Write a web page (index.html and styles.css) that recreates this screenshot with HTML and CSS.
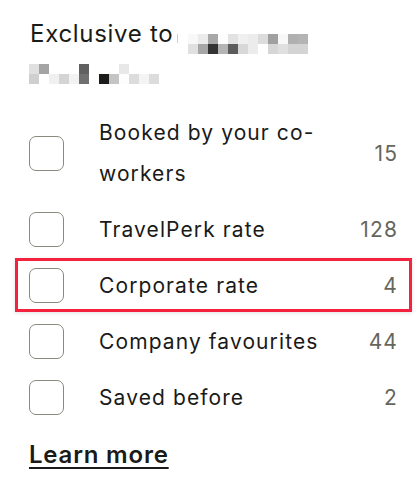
FILE: index.html
```html
<!DOCTYPE html>
<html lang="en">
<head>
    <meta charset="UTF-8">
    <meta name="viewport" content="width=device-width, initial-scale=1.0">
    <title>Exclusive filters</title>
    <link rel="stylesheet" href="styles.css">
</head>
<body>
    <div class="panel">
        <!-- Heading with redacted company name -->
        <div class="title">
            <span>Exclusive to</span><span class="caret"></span><span class="mosaic mosaic-a">
                <i style="background:#f8f8f8"></i><i style="background:#ebebeb"></i><i style="background:#a8a8a8"></i><i style="background:#fdfdfd"></i><i style="background:#e2e2e2"></i><i style="background:#f0f0f0"></i><i style="background:#ececec"></i><i style="background:#dcdcdc"></i><i style="background:#a0a0a0"></i><i style="background:#f8f8f8"></i><i style="background:#b0b0b0"></i><i style="background:#b4b4b4"></i>
                <i style="background:#e0e0e0"></i><i style="background:#a6a6a6"></i><i style="background:#333333"></i><i style="background:#b4b4b4"></i><i style="background:#5c5c5c"></i><i style="background:#d8d8d8"></i><i style="background:#ececec"></i><i style="background:#ffffff"></i><i style="background:#d6d6d6"></i><i style="background:#e0e0e0"></i><i style="background:#d4d4d4"></i><i style="background:#d4d4d4"></i>
            </span>
            <div class="title-line">
                <span class="mosaic mosaic-b">
                    <i style="background:#e0e0e0"></i><i style="background:#a4a4a4"></i><i></i><i></i><i></i><i style="background:#606060"></i><i></i><i></i><i></i><i style="background:#e8e8e8"></i><i></i><i></i><i></i>
                    <i style="background:#cfcfcf"></i><i></i><i style="background:#f0f0f0"></i><i style="background:#d4d4d4"></i><i style="background:#f2f2f2"></i><i style="background:#707070"></i><i></i><i style="background:#1c1c1a"></i><i style="background:#c4c4c4"></i><i style="background:#fdfdfd"></i><i style="background:#dcdcdc"></i><i style="background:#f4f4f4"></i><i style="background:#dcdcdc"></i>
                </span>
            </div>
        </div>

        <!-- Filter options -->
        <ul class="options">
            <li class="option">
                <span class="box"></span>
                <span class="label">Booked by your co-workers</span>
                <span class="count">15</span>
            </li>
            <li class="option">
                <span class="box"></span>
                <span class="label">TravelPerk rate</span>
                <span class="count">128</span>
            </li>
            <li class="option highlight">
                <span class="box"></span>
                <span class="label">Corporate rate</span>
                <span class="count">4</span>
            </li>
            <li class="option">
                <span class="box"></span>
                <span class="label">Company favourites</span>
                <span class="count">44</span>
            </li>
            <li class="option">
                <span class="box"></span>
                <span class="label">Saved before</span>
                <span class="count">2</span>
            </li>
        </ul>

        <a class="learn" href="#">Learn more</a>
    </div>
</body>
</html>
```

FILE: styles.css
```css
body {
    margin: 0;
    padding: 0;
    background-color: #fff;
    font-family: Inter, "Noto Sans", sans-serif;
    color: #1a1a18;
}
.panel {
    padding: 14px 21px 0 29px;
}
.title {
    font-size: 24px;
    line-height: 40px;
    letter-spacing: 0.7px;
    padding-left: 1px;
}
.title-line {
    height: 40px;
    display: flex;
    align-items: center;
}
.caret {
    display: inline-block;
    width: 1px;
    height: 9px;
    margin: 0 0 -1px 4px;
    background: #cfcfcf;
}
.mosaic {
    display: inline-grid;
    grid-auto-rows: 10px;
    vertical-align: -2px;
}
.mosaic i {
    display: block;
    background: #fff;
}
.mosaic-a {
    grid-template-columns: repeat(12, 10px);
    margin-left: 10px;
}
.mosaic-b {
    grid-template-columns: repeat(13, 10px);
    margin-left: -1px;
}
.options {
    list-style: none;
    margin: 18px 0 0;
    padding: 0;
    display: flex;
    flex-direction: column;
    gap: 15px;
}
.option {
    display: flex;
    align-items: center;
    gap: 35px;
    font-size: 21px;
    line-height: 41px;
    letter-spacing: 1.1px;
    position: relative;
}
.box {
    flex: none;
    width: 33px;
    height: 33px;
    border: 1px solid #8a8a7c;
    border-radius: 7px;
}
.label {
    flex: 1;
}
.count {
    min-width: 40px;
    text-align: right;
    color: #66665c;
    margin-right: -1px;
}
.highlight::after {
    content: "";
    position: absolute;
    top: -7px;
    bottom: -6px;
    left: -14px;
    right: -15px;
    border: 3px solid #f5223f;
    box-shadow: 0 1px 4px rgba(0, 0, 0, 0.12);
}
.learn {
    display: inline-block;
    margin-top: 22px;
    font-size: 24px;
    line-height: 30px;
    font-weight: 600;
    letter-spacing: 0.8px;
    color: #1a1a18;
    text-decoration: underline;
    text-underline-offset: 4px;
    text-decoration-thickness: 2px;
}
```
